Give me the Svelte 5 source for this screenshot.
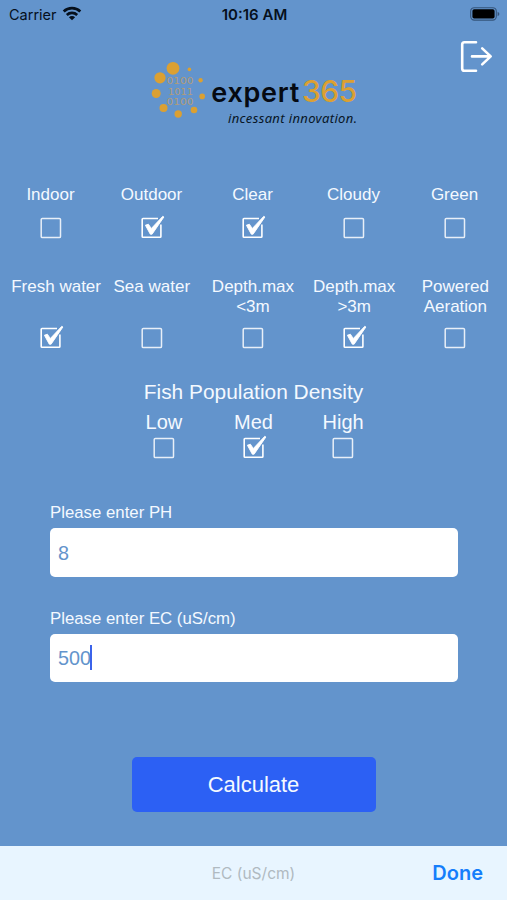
<!-- App.svelte (pond water calculator) -->
<script>
  let conditions = $state([
    { label: 'Indoor', checked: false },
    { label: 'Outdoor', checked: true },
    { label: 'Clear', checked: true },
    { label: 'Cloudy', checked: false },
    { label: 'Green', checked: false }
  ]);

  let waterTypes = $state([
    { label: 'Fresh water', checked: true, wide: true },
    { label: 'Sea water', checked: false },
    { label: 'Depth.max <3m', checked: false },
    { label: 'Depth.max >3m', checked: true },
    { label: 'Powered Aeration', checked: false }
  ]);

  let densities = $state([
    { label: 'Low', checked: false },
    { label: 'Med', checked: true },
    { label: 'High', checked: false }
  ]);

  let ph = '8';
  let ec = '500';

  function toggle(option) {
    option.checked = !option.checked;
  }

  function selectDensity(option) {
    densities.forEach((d) => (d.checked = d === option));
  }
</script>

{#snippet checkbox(checked)}
  <svg class="checkbox" viewBox="0 0 28 28" fill="none" stroke="#fff">
    {#if checked}
      <path d="M20 4.5H5Q4.2 4.5 4.2 5.3V22.4Q4.2 23.2 5 23.2H22.1Q22.9 23.2 22.9 22.4V10.5" stroke-width="1.6" />
      <path d="M7.4 11.2L10.4 10.2L13.3 14.5L24.8 2.3L25.9 3L14.1 20.2H12.3Z" fill="#fff" stroke-width="0.9" stroke-linejoin="round" />
    {:else}
      <rect x="4.2" y="4.4" width="19.3" height="19.2" rx="1.2" stroke-width="1.5" opacity="0.85" />
    {/if}
  </svg>
{/snippet}

{#snippet optionCell(option, onpick)}
  <button class="option" class:wide={option.wide} onclick={() => onpick(option)}>
    <span class="option-label">{option.label}</span>
    {@render checkbox(option.checked)}
  </button>
{/snippet}

<div class="screen">
  <div class="status-bar">
    <div class="carrier">
      <span>Carrier</span>
      <svg class="wifi" viewBox="0 0 20 15" fill="none" stroke="#06101c" stroke-width="2.7">
        <path d="M1.7 5.5A12 12 0 0 1 18.3 5.5" />
        <path d="M4.8 8.9A7.6 7.6 0 0 1 15.2 8.9" />
        <path d="M10 14.2L6.9 11.2A4.4 4.4 0 0 1 13.1 11.2Z" fill="#06101c" stroke="none" />
      </svg>
    </div>
    <span class="clock">10:16 AM</span>
    <svg class="battery" viewBox="0 0 30 14">
      <rect x="0.7" y="0.7" width="25.6" height="12.4" rx="3.6" fill="none" stroke="#35547a" stroke-width="1.1" />
      <rect x="2.4" y="2.3" width="22.2" height="9.2" rx="1.8" fill="#000" />
      <path d="M27.6 4.8Q29.4 5.6 29.4 7T27.6 9.2Z" fill="#35547a" />
    </svg>
  </div>

  <header class="header">
    <svg class="logo" viewBox="0 0 208 70">
      <g fill="#dba032">
        <circle cx="23" cy="8.3" r="6.4" />
        <circle cx="10" cy="17.8" r="5.6" />
        <circle cx="6.2" cy="33.5" r="4.5" />
        <circle cx="13.5" cy="48" r="4" />
        <circle cx="28.2" cy="54" r="3.7" />
        <circle cx="44" cy="50" r="3.3" />
        <circle cx="52.2" cy="36.4" r="2.8" />
        <circle cx="50.6" cy="20.2" r="2.2" />
        <circle cx="39.4" cy="9.4" r="1.8" />
      </g>
      <g class="digits">
        <text x="16.5" y="24" textLength="27" lengthAdjust="spacingAndGlyphs">0100</text>
        <text x="18" y="34.5" textLength="25" lengthAdjust="spacingAndGlyphs">1011</text>
        <text x="16.5" y="45" textLength="27" lengthAdjust="spacingAndGlyphs">0100</text>
      </g>
      <text class="brand" x="61.3" y="41.5" textLength="88">expert</text>
      <text class="brand-number" x="152" y="41.5" textLength="55">365</text>
      <text class="tagline" x="78" y="63" textLength="129">incessant innovation.</text>
    </svg>
    <button class="logout" aria-label="Log out">
      <svg viewBox="0 0 34 34" fill="none" stroke="#fff" stroke-width="2.6" stroke-linecap="round" stroke-linejoin="round">
        <path d="M17 2.2H5.4Q3.2 2.2 3.2 4.5V28.4Q3.2 30.7 5.4 30.7H17" />
        <path d="M13 16.4H31.5M23.2 8.4L31.7 16.4L23.2 24.4" />
      </svg>
    </button>
  </header>

  <div class="options conditions">
    {#each conditions as option}
      {@render optionCell(option, toggle)}
    {/each}
  </div>

  <div class="options water">
    {#each waterTypes as option}
      {@render optionCell(option, toggle)}
    {/each}
  </div>

  <h2 class="density-title">Fish Population Density</h2>
  <div class="density">
    {#each densities as option}
      {@render optionCell(option, selectDensity)}
    {/each}
  </div>

  <div class="form">
    <div class="field">
      <span class="field-label">Please enter PH</span>
      <div class="input">{ph}</div>
    </div>
    <div class="field">
      <span class="field-label">Please enter EC (uS/cm)</span>
      <div class="input">{ec}<span class="caret"></span></div>
    </div>
  </div>

  <button class="calculate">Calculate</button>

  <div class="accessory">
    <span class="hint">EC (uS/cm)</span>
    <button class="done">Done</button>
  </div>
</div>

<style>
  :global(body) {
    margin: 0;
    background-color: #6394cc;
  }

  .screen {
    width: 507px;
    height: 900px;
    display: flex;
    flex-direction: column;
    background-color: #6394cc;
    color: #f4f9ff;
    font-family: "Liberation Sans", Arial, sans-serif;
    overflow: hidden;
  }

  button {
    border: none;
    background: none;
    padding: 0;
    color: inherit;
    font-family: inherit;
    cursor: pointer;
  }

  .status-bar {
    display: grid;
    grid-template-columns: 1fr auto 1fr;
    align-items: center;
    height: 28px;
    padding: 0 7px 0 9px;
    box-sizing: border-box;
    color: #06101c;
    font-family: Inter, sans-serif;
    font-size: 14.5px;
  }

  .carrier {
    display: flex;
    align-items: center;
    gap: 5px;
  }

  .wifi {
    width: 20px;
    height: 15px;
    margin-bottom: 2px;
  }

  .clock {
    font-size: 15px;
    font-weight: 600;
  }

  .battery {
    width: 30px;
    height: 14px;
    justify-self: end;
    margin-bottom: 1px;
  }

  .header {
    display: grid;
    grid-template-columns: 150px 208px 1fr;
    height: 157px;
    padding: 12px 14px 0 0;
    box-sizing: border-box;
  }

  .logo {
    grid-column: 2;
    width: 208px;
    height: 70px;
    margin-top: 20px;
  }

  .digits {
    font-family: "DejaVu Sans", sans-serif;
    font-size: 8.5px;
    fill: #b29c78;
  }

  .brand {
    font-family: Inter, sans-serif;
    font-size: 27px;
    font-weight: 600;
    fill: #050a12;
  }

  .brand-number {
    font-family: Inter, sans-serif;
    font-size: 30px;
    font-weight: 500;
    fill: #dba032;
  }

  .tagline {
    font-family: "Noto Sans", sans-serif;
    font-size: 13px;
    font-style: italic;
    fill: #081626;
  }

  .logout {
    justify-self: end;
    align-self: start;
    width: 34px;
    height: 34px;
  }

  .logout svg {
    display: block;
  }

  .options {
    display: grid;
    grid-template-columns: repeat(5, 101px);
  }

  .conditions {
    height: 92px;
  }

  .water {
    grid-template-columns: repeat(5, 101.2px);
    height: 102px;
  }

  .option {
    display: flex;
    flex-direction: column;
    align-items: center;
    font-size: 17px;
    line-height: 20px;
  }

  .option-label {
    width: 90px;
  }

  .conditions .option-label {
    height: 29px;
  }

  .water .option-label {
    height: 47px;
  }

  .wide .option-label {
    padding-left: 11px;
    white-space: nowrap;
  }

  .checkbox {
    display: block;
    width: 28px;
    height: 28px;
    flex-shrink: 0;
  }

  .density-title {
    margin: 1px 0 7px;
    font-size: 20.9px;
    font-weight: 400;
    line-height: 24px;
    text-align: center;
  }

  .density {
    display: grid;
    grid-template-columns: repeat(3, 89.6px);
    justify-content: center;
    height: 92px;
  }

  .density .option {
    font-size: 20px;
    line-height: 23px;
  }

  .form {
    display: flex;
    flex-direction: column;
    gap: 31px;
    padding: 0 49px 0 50px;
  }

  .field {
    display: flex;
    flex-direction: column;
    gap: 5px;
  }

  .field-label {
    font-size: 16.8px;
    line-height: 20px;
  }

  .field + .field {
    padding-top: 1px;
  }

  .input {
    display: flex;
    align-items: center;
    height: 48.5px;
    padding: 2px 8px 0;
    box-sizing: border-box;
    border-radius: 5px;
    background-color: #fff;
    color: #6394cc;
    font-size: 19.8px;
  }

  .caret {
    width: 2px;
    height: 25px;
    margin: 0 0 3px -1px;
    background-color: #3b63ea;
  }

  .calculate {
    align-self: center;
    width: 244px;
    height: 55px;
    margin-top: 75px;
    border-radius: 5px;
    background-color: #2c60f4;
    font-size: 22px;
  }

  .accessory {
    display: grid;
    grid-template-columns: 1fr auto 1fr;
    align-items: center;
    height: 54px;
    margin-top: auto;
    padding: 0 24px;
    background-color: #e8f5ff;
    font-family: Inter, sans-serif;
  }

  .hint {
    grid-column: 2;
    color: #b0bac1;
    font-size: 15.5px;
  }

  .done {
    justify-self: end;
    color: #157efb;
    font-size: 20px;
    font-weight: 600;
  }
</style>
